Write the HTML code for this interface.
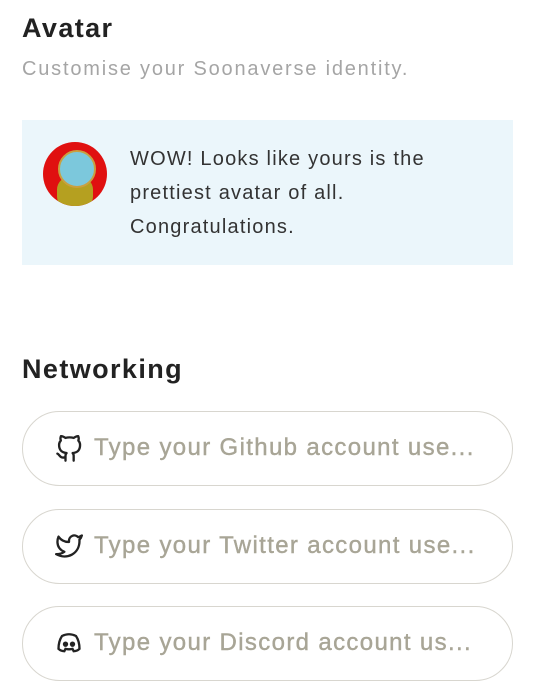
<!DOCTYPE html>
<html><head><style>
body{margin:0;width:533px;height:646px;overflow:hidden;background:#fff;font-family:"Liberation Sans",sans-serif;position:relative}
.a{position:absolute}
h1{position:absolute;margin:0;font-size:27px;font-weight:bold;color:#222;letter-spacing:1.4px}
.inp{position:absolute;left:22px;width:489px;height:73px;border:1.5px solid #d8d6cf;border-radius:38px;box-sizing:content-box}
.inp span{position:absolute;left:71px;top:22px;font-size:24px;color:#a8a596;white-space:nowrap;letter-spacing:1.35px;-webkit-text-stroke:0.4px #a8a596}
.inp svg{position:absolute;left:32px;top:22px}
</style></head><body>
<h1 style="left:22px;top:13px">Avatar</h1>
<div class="a" style="left:22px;top:58px;font-size:20px;color:#a5a5a5;letter-spacing:1.8px">Customise your Soonaverse identity.</div>
<div class="a" style="left:22px;top:120px;width:491px;height:145px;background:#ebf6fb"></div>
<div class="a" style="left:43px;top:142px;width:64px;height:64px;border-radius:50%;background:#e01010;overflow:hidden">
 <div class="a" style="left:14px;top:34px;width:36px;height:34px;border-radius:40%;background:#b5a020"></div>
 <div class="a" style="left:15px;top:8px;width:34px;height:34px;border-radius:50%;background:#7cc8dc;border:2px solid #c9a040"></div>
</div>
<div class="a" style="left:130px;top:142px;font-size:20px;line-height:34px;color:#333;letter-spacing:1.2px">WOW! Looks like yours is the<br>prettiest avatar of all.<br>Congratulations.</div>
<h1 style="left:22px;top:354px">Networking</h1>
<div class="inp" style="top:411px"><svg width="28" height="30" viewBox="0 0 24 24" fill="none" stroke="#222" stroke-width="2" stroke-linecap="round" stroke-linejoin="round"><path d="M9 19c-5 1.5-5-2.5-7-3m14 6v-3.9a3.4 3.4 0 0 0-.9-2.6c3.1-.3 6.4-1.5 6.4-7A5.4 5.4 0 0 0 20 4.8 5 5 0 0 0 19.9 1S18.7.7 16 2.5a13.4 13.4 0 0 0-7 0C6.3.7 5.1 1 5.1 1A5 5 0 0 0 5 4.8 5.4 5.4 0 0 0 3.5 8.5c0 5.4 3.3 6.6 6.4 7a3.4 3.4 0 0 0-.9 2.6V22"/></svg><span>Type your Github account use...</span></div>
<div class="inp" style="top:509px"><svg width="28" height="28" viewBox="0 0 24 24" fill="none" stroke="#222" stroke-width="2" stroke-linecap="round" stroke-linejoin="round"><path d="M23 3a10.9 10.9 0 0 1-3.1 1.5 4.5 4.5 0 0 0-7.9 3v1A10.7 10.7 0 0 1 3 4s-4 9 5 13a11.6 11.6 0 0 1-7 2c9 5 20 0 20-11.5a4.5 4.5 0 0 0-.1-.8A7.7 7.7 0 0 0 23 3z"/></svg><span>Type your Twitter account use...</span></div>
<div class="inp" style="top:606px"><svg width="28" height="28" viewBox="0 0 24 24" fill="none" stroke="#222" stroke-width="2"><path d="M6 6c4-2 8-2 12 0 2 3 3 7 3 11-2 2-4 2-5 2l-1-2c-2 .5-4 .5-6 0l-1 2c-1 0-3 0-5-2 0-4 1-8 3-11z"/><circle cx="9" cy="13" r="1.3" fill="#222"/><circle cx="15" cy="13" r="1.3" fill="#222"/></svg><span>Type your Discord account us...</span></div>
</body></html>
